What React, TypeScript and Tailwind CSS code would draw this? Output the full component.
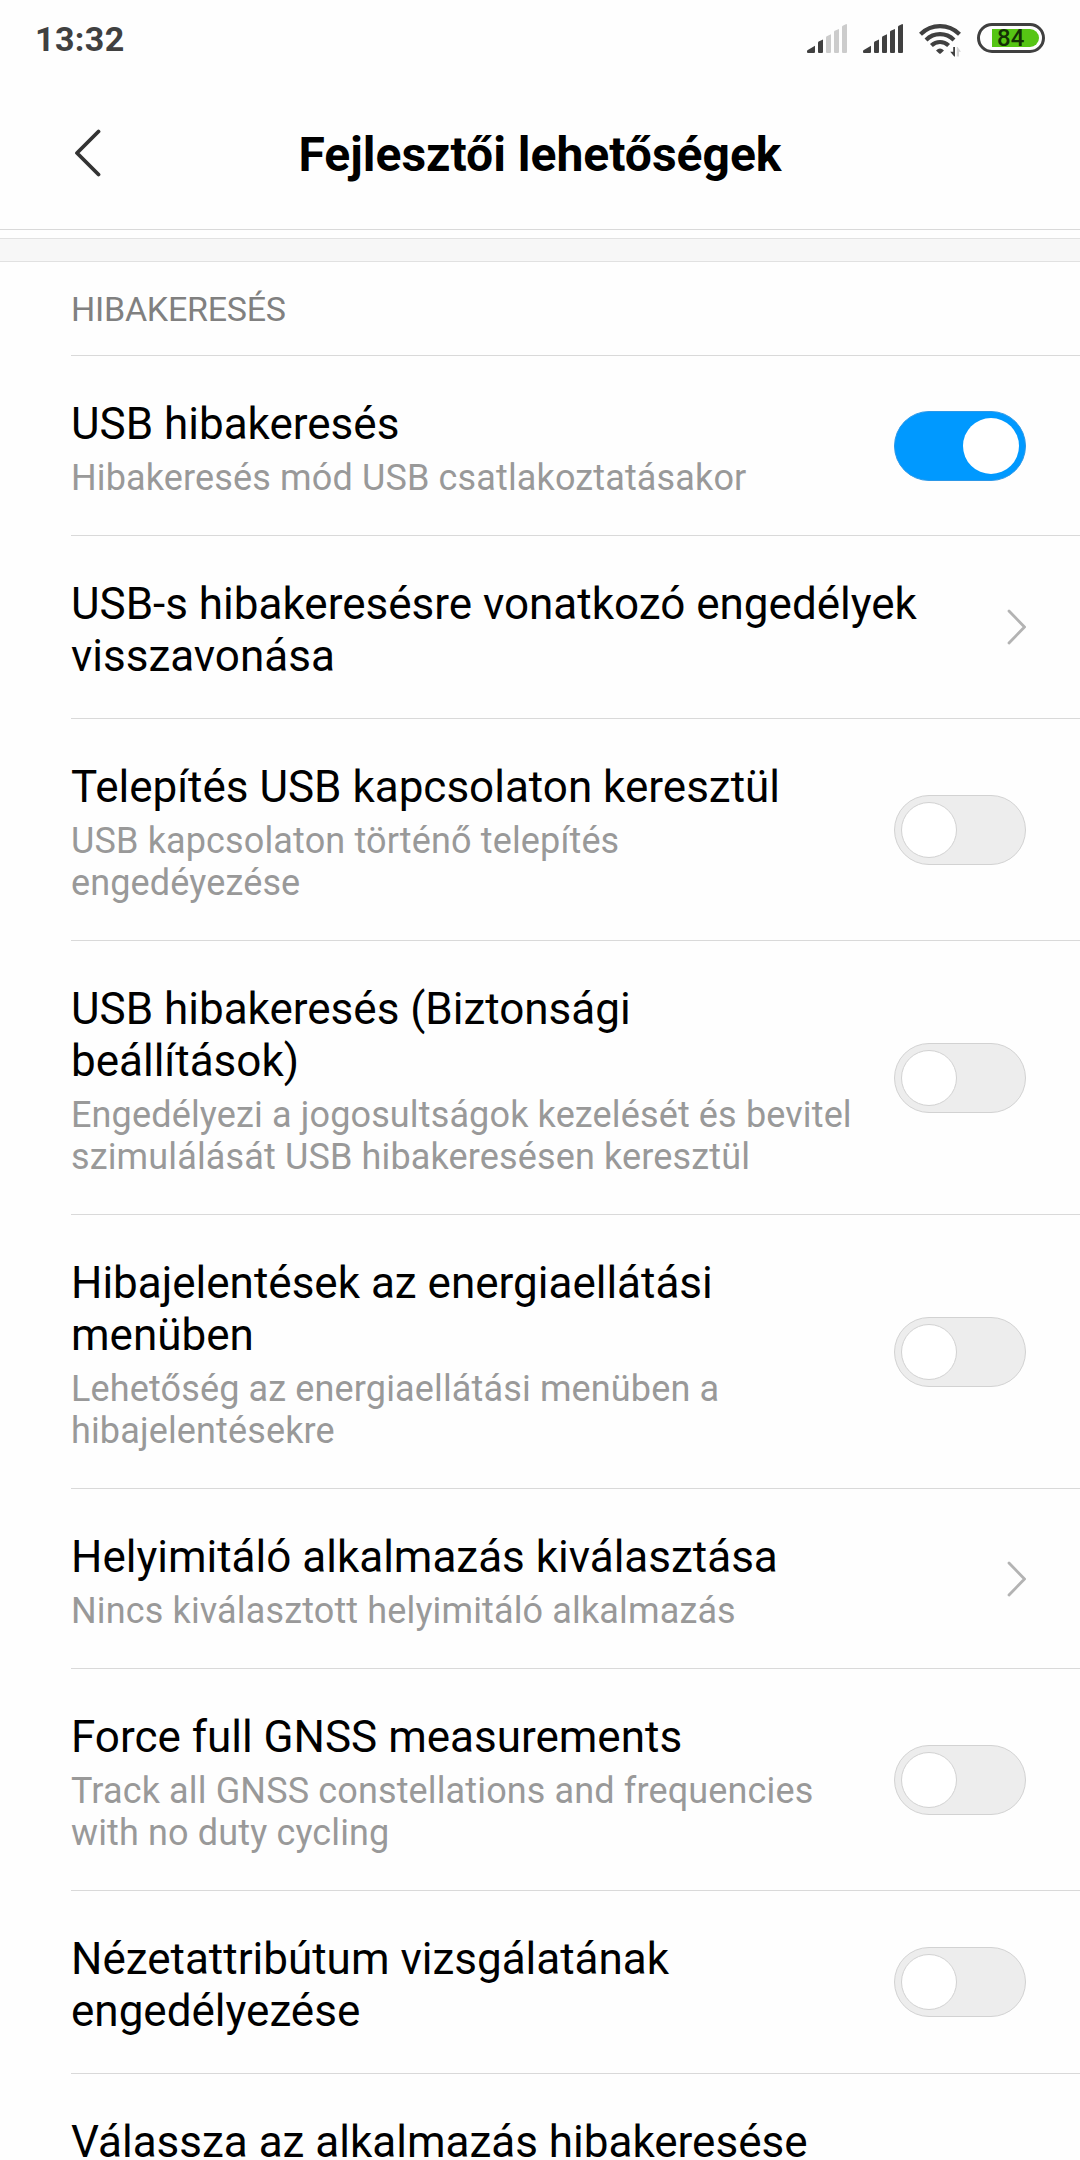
import { useState } from 'react';
import clsx from 'clsx';

type Item = {
  id: string;
  title: string;
  summary?: string;
  kind: 'switch' | 'link' | 'plain';
  enabled?: boolean;
};

const items: Item[] = [
  { id: 'adb', title: 'USB hibakeresés', summary: 'Hibakeresés mód USB csatlakoztatásakor', kind: 'switch', enabled: true },
  { id: 'adb-keys', title: 'USB-s hibakeresésre vonatkozó engedélyek visszavonása', kind: 'link' },
  { id: 'adb-install', title: 'Telepítés USB kapcsolaton keresztül', summary: 'USB kapcsolaton történő telepítés engedéyezése', kind: 'switch' },
  { id: 'adb-input', title: 'USB hibakeresés (Biztonsági beállítások)', summary: 'Engedélyezi a jogosultságok kezelését és bevitel szimulálását USB hibakeresésen keresztül', kind: 'switch' },
  { id: 'bugreport', title: 'Hibajelentések az energiaellátási menüben', summary: 'Lehetőség az energiaellátási menüben a hibajelentésekre', kind: 'switch' },
  { id: 'mock', title: 'Helyimitáló alkalmazás kiválasztása', summary: 'Nincs kiválasztott helyimitáló alkalmazás', kind: 'link' },
  { id: 'gnss', title: 'Force full GNSS measurements', summary: 'Track all GNSS constellations and frequencies with no duty cycling', kind: 'switch' },
  { id: 'view-attr', title: 'Nézetattribútum vizsgálatának engedélyezése', kind: 'switch' },
  { id: 'debug-app', title: 'Válassza az alkalmazás hibakeresése', kind: 'plain' },
];

// Five slanted bars, the ones above `level` are dimmed
function Signal({ level }: { level: number }) {
  const bars = [
    'M0 29v-1.6q0-.8.8-1.3L8 21.7V28q0 1-1 1H1q-1 0-1-1z',
    'M11 18.7q0-.8.7-1.2L16 15.6V28q0 1-1 1h-3q-1 0-1-1z',
    'M19 13.4q0-.8.7-1.2L24 10.3V28q0 1-1 1h-3q-1 0-1-1z',
    'M27 8q0-.8.7-1.2L32 4.9V28q0 1-1 1h-3q-1 0-1-1z',
    'M35 3q0-.8.7-1.3L38.8.2Q40-.2 40 1v27q0 1-1 1h-3q-1 0-1-1z',
  ];
  return (
    <svg width="40" height="29" viewBox="0 0 40 29">
      {bars.map((d, i) => (
        <path key={i} d={d} fill={i < level ? '#404040' : '#cccccc'} />
      ))}
    </svg>
  );
}

function Wifi() {
  return (
    <svg width="42" height="33" viewBox="0 0 42 33" fill="none">
      <g stroke="#404040" strokeWidth="4.2">
        <path d="M1.5 10.2C12.5-.6 29.5-.6 40.5 10.2" />
        <path d="M7 15.9C15 8.2 27 8.2 35 15.9" />
        <path d="M12.4 21.5C17.4 16.8 24.6 16.8 29.6 21.5" />
      </g>
      <path d="M17 26.6Q21 22.6 25 26.6L21.8 29.5Q21 30.1 20.2 29.5z" fill="#404040" />
      <path d="M34.2 23H36V32.5H35.2L31.2 27.8H34.2z" fill="#404040" />
      <path d="M37.8 23H38.6L42 27.8H40V32.5H37.8z" fill="#d4d4d4" />
    </svg>
  );
}

function Battery({ percent }: { percent: number }) {
  return (
    <div className="flex h-[30px] w-[68px] items-center justify-end rounded-full border-[3px] border-[#404040] bg-[#fefefe] pr-[3px]">
      <div className="flex h-[18px] w-[47px] items-center rounded-l-[2px] rounded-r-full bg-[#56c514] pl-[5px] text-[24px] leading-none font-medium text-[#143005]">
        {percent}
      </div>
    </div>
  );
}

function Toggle({ on, onClick }: { on: boolean; onClick: () => void }) {
  return (
    <button
      type="button"
      role="switch"
      aria-checked={on}
      onClick={onClick}
      className={clsx(
        'flex h-[70px] w-[132px] shrink-0 items-center rounded-full border',
        on ? 'justify-end border-[#2b98e8] bg-[#0099ff] pr-[6px]' : 'border-[#d2d2d2] bg-[#ededed] pl-[6px]'
      )}
    >
      <span className={clsx('size-14 rounded-full bg-white', !on && 'border border-[#d2d2d2]')} />
    </button>
  );
}

function Row({ item }: { item: Item }) {
  const [on, setOn] = useState(!!item.enabled);
  const isSwitch = item.kind === 'switch';

  return (
    <li className="ml-[71px] flex items-center justify-between border-b border-[#d9d9d9] pr-[54px]">
      <div className={clsx('pt-[42px] pb-9', isSwitch ? 'w-[783px]' : 'w-[880px]')}>
        <h2 className="text-[44px] leading-[52px] text-black">{item.title}</h2>
        {item.summary && (
          <p className="mt-[7px] text-[36px] leading-[42px] tracking-[0.14px] text-[#999999]">{item.summary}</p>
        )}
      </div>
      {isSwitch && <Toggle on={on} onClick={() => setOn(!on)} />}
      {item.kind === 'link' && (
        <svg width="19" height="36" viewBox="0 0 19 36" fill="none" className="shrink-0">
          <path d="M2 2L17.5 18L2 34" stroke="#b3b3b3" strokeWidth="2.8" strokeLinecap="round" />
        </svg>
      )}
    </li>
  );
}

export default function App() {
  return (
    <div className="h-[2160px] w-[1080px] overflow-hidden bg-[#fefefe] font-['Roboto',sans-serif]">
      {/* Status bar */}
      <div className="flex h-[76px] items-center justify-between px-[35px]">
        <span className="pt-px text-[34px] leading-10 font-bold tracking-[0.4px] text-[#404040]">13:32</span>
        <div className="flex items-center">
          <Signal level={2} />
          <div className="ml-4 flex">
            <Signal level={5} />
          </div>
          <div className="mt-1 ml-4">
            <Wifi />
          </div>
          <div className="ml-4">
            <Battery percent={84} />
          </div>
        </div>
      </div>

      {/* Header */}
      <header className="grid h-[154px] grid-cols-[1fr_auto_1fr] items-center border-b border-[#d9d9d9]">
        <button type="button" aria-label="Vissza" className="ml-[73px] w-fit pt-px">
          <svg width="30" height="48" viewBox="0 0 30 48" fill="none">
            <path d="M25.5 2.5L4 24L25.5 45.5" stroke="#333333" strokeWidth="3.8" strokeLinecap="round" strokeLinejoin="round" />
          </svg>
        </button>
        <h1 className="pt-1 text-[48px] leading-[56px] font-bold text-black">Fejlesztői lehetőségek</h1>
      </header>

      <div className="mt-2 h-6 border-y border-[#e1e1e1] bg-[#f7f7f7]" />

      <main>
        <div className="ml-[71px] h-[94px] border-b border-[#d9d9d9] pt-[27px] text-[34px] leading-10 tracking-[-0.25px] text-[#808080]">
          HIBAKERESÉS
        </div>
        <ul>
          {items.map((item) => (
            <Row key={item.id} item={item} />
          ))}
        </ul>
      </main>
    </div>
  );
}
